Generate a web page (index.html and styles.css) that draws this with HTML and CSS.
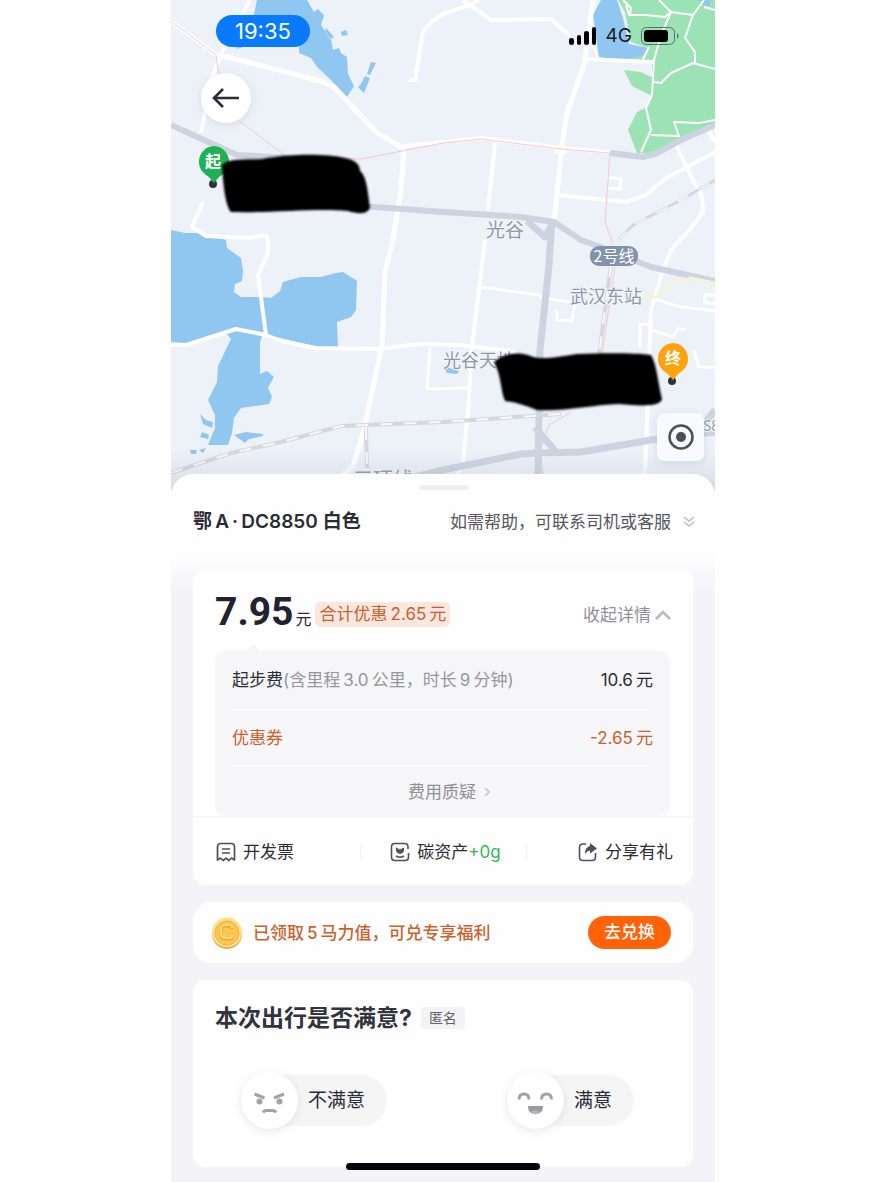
FILE: index.html
```html
<!DOCTYPE html>
<html lang="zh-CN">
<head>
<meta charset="utf-8">
<meta name="viewport" content="width=device-width, initial-scale=1">
<title>行程详情</title>
<link rel="stylesheet" href="styles.css">
</head>
<body>
<main class="phone">
  <section class="map" aria-label="地图">
    <svg class="map-canvas" viewBox="0 0 544 490">
      <defs>
        <filter id="soft" x="-10%" y="-20%" width="120%" height="140%"><feGaussianBlur stdDeviation="1.2"/></filter>
        <linearGradient id="shade" x1="0" y1="0" x2="0" y2="1"><stop offset="0" stop-color="#aab4c6" stop-opacity="0"/><stop offset="1" stop-color="#9aa4b8" stop-opacity=".3"/></linearGradient>
      </defs>
      <rect width="544" height="490" fill="#edf1f8"/>
      <g fill="#8fc7f0">
        <path d="M86 0L83 14 62 40 66 49 75 46 128 46 128 53 140 58 146 67 160 80 176 97 183 86 177 74 176 57 170 53 168 48 162 50 160 40 150 25 153 15 147 9 143 12 136 0Z"/>
        <path d="M155 28L163 37 160 39 154 31ZM170 32L175 30 177 35 171 36ZM200 62L205 63 199 75 196 74ZM194 76L199 78 193 93 187 87 190 84Z"/>
        <path d="M430 0L422 15 428 57 453 61 475 55 477 48 458 44 452 18 446 0Z"/>
        <path d="M0 230L14 233 30 233 55 240 56 248 70 258 72 271 71 281 64 284 63 292 70 297 90 297 100 298 109 291 112 282 130 277 150 277 165 273 172 272 186 281 185 310 180 317 166 322 167 347 145 347 110 338 92 334 89 342 89 374 96 371 103 377 97 388 101 397 98 404 70 408 63 418 61 433 57 445 37 445 44 428 44 415 37 400 46 382 47 366 60 339 55 333 15 343 0 342Z"/>
        <path d="M29 414L35 420 42 422 41 428 32 424ZM31 432L38 435 37 439 29 437ZM19 450L26 450 25 454 20 454ZM28 450L35 448 32 453ZM63 435L75 432 92 434 92 436 78 439 74 443ZM272 366L288 371 286 374 276 373Z"/>
      </g>
      <path fill="#9be2b4" d="M447 0L544 0 544 126 515 138 500 147 485 153 466 153 457 130 466 112 476 107 481 96 461 86 453 70 470 72 480 77 480 72 453 61 476 54 477 48 460 42 454 12Z"/>
      <path fill="#edf1f8" d="M456 63L481 63 481 77 465 69Z"/>
      <path fill="#8fc7f0" d="M526 0L540 0 538 7Z"/>
      <g fill="none" stroke="#fff" stroke-width="2" stroke-linejoin="round">
        <path d="M455 5L458 15 475 15 494 17 500 12 522 15 533 0M488 0L500 12 490 35 483 60 481 95 475 108 480 130 470 152M483 82L490 83 500 73 522 63 544 69M522 15L514 38 524 52 524 63M480 135L508 136 503 122 528 123 544 120M533 7L544 10M452 0L460 8 459 15M422 46L427 58M478 47L472 59"/>
      </g>
      <g fill="none" stroke="#fff" stroke-width="4" stroke-linejoin="round">
        <path stroke-width="5" d="M45 55L60 58 150 81 163 87 176 101 205 132 232 148M233 148L230 190 222 240 214 272 211 345 193 430 182 466 168 478M422 0L415 50 414 62 396 113 391 145 383 222"/>
        <path d="M0 21L45 55M79 0L52 50 40 80 30 133M272 14L260 22 252 32 244 80 238 80M272 14L299 5 320 20 380 19 399 36M292 0L299 5 308 0M415 59L482 62M226 147L272 142 310 138 390 148 439 152M388 195L455 202 475 195 495 178 520 165 544 152M536 128L544 142M505 145L518 172 531 197 532 212 520 228 500 250 492 270 480 310 474 474M324 143L317 210M384 151L396 151"/>
        <path d="M0 345L15 345 65 329 95 335 110 341 145 348 205 349 250 344 290 345 344 352M95 335L87 275 97 253 97 240 95 235 78 238 35 236 21 227 32 202M314 240L300 355 298 400 292 462 287 474"/>
        <path stroke-width="3" d="M311 287L368 295 374 301M374 298L404 303 401 321 386 320 386 310M480 298L510 307 544 311M469 347L469 324 479 325M259 347L256 389 296 388M436 177L450 179 449 189 438 188M544 295L534 295 534 302 544 304M480 330L502 337 507 329 515 329M523 350L528 367 544 367"/>
      </g>
      <g fill="none" stroke="#f5c9cd" stroke-width="1">
        <path d="M0 21L45 55 47 70 67 120 115 156 190 159 272 143 310 139 390 149 439 153 434 222 442 244M445 260L431 355M372 474L369 450 378 425 400 412"/>
      </g>
      <g fill="none" stroke="#cbd4e0" stroke-width="6" stroke-linejoin="round">
        <path d="M0 125L66 155 120 158M190 206L272 212 350 217 383 222 410 240 435 249 480 267 544 281M439 153L472 157 486 153 510 140 544 125"/>
        <path stroke-width="7" d="M381 221L378 265 369 350 367 474M240 478L272 470 350 454 364 453 410 452 480 440 544 432M364 427L385 452M356 221L374 237 383 222M527 432L544 410"/>
      </g>
      <g fill="none">
        <path stroke="#d6d7da" stroke-width="4" d="M0 473L60 453 110 442 170 426 220 424 272 422 390 414M195 428L196 468M440 265L428 355"/>
        <path stroke="#f8f9fa" stroke-width="2" stroke-dasharray="12 12" d="M0 473L60 453 110 442 170 426 220 424 272 422 390 414M195 428L196 468M440 265L428 355"/>
        <path stroke="#d6d7da" stroke-width="3" d="M447 240L462 225 510 200 544 180"/>
        <path stroke="#f8f9fa" stroke-width="1.500" stroke-dasharray="12 12" d="M447 240L462 225 510 200 544 180"/>
        <path stroke="#f6f3d9" stroke-width="3" d="M466 298L485 297 498 284 520 278 544 283"/>
      </g>
      <g class="map-label">
        <text x="315" y="237" font-size="19">光谷</text>
        <text x="399" y="303" font-size="18">武汉东站</text>
        <text x="272" y="367" font-size="18">光谷天地</text>
        <text x="182" y="487" font-size="20">三环线</text>
        <text x="532" y="431" font-size="14">S8</text>
      </g>
      <rect x="419" y="246" width="48" height="20" rx="9" fill="#8392ad"/>
      <text class="line-label" x="443" y="262" text-anchor="middle">2号线</text>
      <rect y="450" width="544" height="40" fill="url(#shade)"/>
      <circle cx="42" cy="184" r="4" fill="#303238"/>
      <path fill="#1fb155" d="M43 146a15.500 15.500 0 0 1 15 16c0 7-4 11-10 15l-5 6-5-6c-6-4-10-8-10-15a15.500 15.500 0 0 1 15-16Z"/>
      <text class="pin-label" x="42" y="167" text-anchor="middle">起</text>
      <circle cx="501" cy="381" r="4" fill="#303238"/>
      <path fill="#fba30c" d="M502 343a15.500 15.500 0 0 1 15 16c0 7-4 11-10 15l-5 6-5-6c-6-4-10-8-10-15a15.500 15.500 0 0 1 15-16Z"/>
      <text class="pin-label" x="502" y="364" text-anchor="middle">终</text>
      <g filter="url(#soft)">
        <path d="M51 165C58 158 74 160 91 159 115 154 155 153 174 158 186 160 189 166 189 171 196 176 197 195 199 207 197 215 187 214 177 211 146 208 106 213 60 212 54 205 52 182 51 165Z"/>
        <path d="M323 362C332 353 348 352 357 355 370 361 385 357 406 354 435 353 465 353 480 355 486 365 487 384 491 399 489 407 470 406 448 404 420 405 390 412 366 410 357 407 350 403 334 401 329 389 331 377 323 362Z"/>
      </g>
    </svg>
    <div class="status">
      <span class="clock">19:35</span>
      <span class="signals">
        <svg width="28" height="18" viewBox="0 0 28 18" aria-hidden="true"><path d="M0 13a2.500 2 0 0 1 5 0v3a2.500 2 0 0 1-5 0ZM8 10a2 2 0 0 1 4 0v6a2 2 0 0 1-4 0ZM15 6a2.500 2 0 0 1 5 0v10a2.500 2 0 0 1-5 0ZM23 2a2 2 0 0 1 4 0v14a2 2 0 0 1-4 0Z"/></svg>
        <span>4G</span>
        <svg width="38" height="18" viewBox="0 0 38 18" aria-hidden="true"><rect x=".5" y=".5" width="33" height="17" rx="5" fill="none" stroke="#626a72"/><rect x="3" y="3" width="24" height="12" rx="3"/><path d="M36 6q3 3 0 6Z" fill="#626a72"/></svg>
      </span>
    </div>
    <button class="back" type="button" aria-label="返回"><svg width="28" height="22" viewBox="0 0 28 22"><path d="M27 11H2M11 2L2 11l9 9" fill="none" stroke="#2e2b38" stroke-width="2.600"/></svg></button>
    <button class="locate" type="button" aria-label="定位"><svg width="28" height="28" viewBox="0 0 28 28"><circle cx="14" cy="14" r="11.500" fill="none" stroke="#4d4d58" stroke-width="2.500"/><circle cx="14" cy="14" r="5" fill="#4d4d58"/></svg></button>
  </section>

  <section class="sheet">
    <header class="sheet-head">
      <span class="grip"></span>
      <div class="car-row">
        <h1 class="plate">鄂&thinsp;A&thinsp;·&thinsp;DC8850 白色</h1>
        <button class="help" type="button">如需帮助，可联系司机或客服
          <svg width="12" height="12" viewBox="0 0 12 12" aria-hidden="true"><path d="M1 1l5 4 5-4M1 6l5 4 5-4" fill="none" stroke="#bcbcc2" stroke-width="1.500"/></svg>
        </button>
      </div>
    </header>

    <div class="cards">
      <article class="card">
        <div class="price-row">
          <div class="total"><strong class="price">7.95</strong><span class="unit">元</span></div>
          <span class="saving">合计优惠&thinsp;2.65&thinsp;元</span>
          <button class="toggle" type="button">收起详情
            <svg width="16" height="11" viewBox="0 0 16 11" aria-hidden="true"><path d="M1 10l7-7 7 7" fill="none" stroke="#b9b9be" stroke-width="2.500"/></svg>
          </button>
        </div>
        <div class="details">
          <div class="fee"><span>起步费<span class="muted">(含里程&thinsp;3.0&thinsp;公里，时长&thinsp;9&thinsp;分钟)</span></span><span>10.6&thinsp;元</span></div>
          <div class="fee coupon"><span>优惠券</span><span>-2.65&thinsp;元</span></div>
          <button class="dispute" type="button">费用质疑
            <svg width="7" height="12" viewBox="0 0 7 12" aria-hidden="true"><path d="M1 2l4 4-4 4" fill="none" stroke="#c3c3c8" stroke-width="1.500"/></svg>
          </button>
        </div>
        <nav class="actions">
          <button class="action first" type="button"><svg width="20" height="20" viewBox="0 0 20 20" aria-hidden="true"><path d="M1.500 18V5q0-3.500 3.500-3.500h10q3.500 0 3.500 3.500v13l-3-2-2.700 2.500L10 16.200l-2.800 2.300L4.500 16ZM6 7h8M6 11h8" fill="none" stroke="#50505a" stroke-width="1.700" stroke-linejoin="round"/></svg>开发票</button>
          <button class="action" type="button"><svg width="20" height="20" viewBox="0 0 20 20" aria-hidden="true"><path d="M18 7V5q0-3.500-3.500-3.500H5Q1.500 1.500 1.500 5v10q0 3.500 3.500 3.500h10q3.500 0 3.500-3.500v-4M6 14q4 2.500 8 0" fill="none" stroke="#50505a" stroke-width="1.600"/><path d="M10 12Q5 11 6 5.500q2.500 0 3 2.500l1-2 1 2q.5-2.500 3-2.500 1 5.500-4 6.500Z" fill="#50505a"/></svg><span>碳资产<span class="green">+0g</span></span></button>
          <button class="action last" type="button"><svg width="20" height="20" viewBox="0 0 20 20" aria-hidden="true"><path d="M8 2H5Q1.500 2 1.500 5.500V15q0 3.500 3.500 3.500h9q3.500 0 3.500-3.500v-4" fill="none" stroke="#50505a" stroke-width="1.600"/><path d="M12 1l7 5.500-7 5V8.500q-3 .2-5 3.500 0-7 5-8Z" fill="#50505a"/></svg>分享有礼</button>
        </nav>
      </article>

      <article class="card reward">
        <svg width="32" height="32" viewBox="0 0 32 32" aria-hidden="true"><circle cx="16" cy="17" r="15" fill="#e0a04a"/><circle cx="16" cy="15.500" r="15" fill="#ffe084"/><circle cx="16" cy="16" r="12" fill="#f9c650" stroke="#f0b240"/><path d="M21 12v-1q0-2-2-2h-4q-5 0-5 5v3q0 5 5 5h4q2 0 2-2v-1" fill="none" stroke="#eba53c" stroke-width="3"/><path d="M21 11v-1q0-2-2-2h-4q-5 0-5 5v3q0 5 5 5h4q2 0 2-2v-1" fill="none" stroke="#ffdc80" stroke-width="2"/></svg>
        <span class="reward-text">已领取&thinsp;5&thinsp;马力值，可兑专享福利</span>
        <button class="redeem" type="button">去兑换</button>
      </article>

      <article class="card rating">
        <div class="rating-head"><h2>本次出行是否满意?</h2><span class="tag">匿名</span></div>
        <div class="choices">
          <button class="choice" type="button"><span class="face"><svg width="57" height="57" viewBox="0 0 57 57" aria-hidden="true"><g fill="none" stroke="#a2a2aa" stroke-width="3"><path d="M13.500 22l10 4M43 22l-10 4M22 40.500q1-2 4-2h5q3 0 4 2"/></g><circle cx="18.500" cy="29.500" r="3" fill="#a2a2aa"/><circle cx="38.500" cy="29.500" r="3" fill="#a2a2aa"/></svg></span>不满意</button>
          <button class="choice" type="button"><span class="face"><svg width="57" height="57" viewBox="0 0 57 57" aria-hidden="true"><g fill="none" stroke="#a2a2aa" stroke-width="3"><path d="M12 27.500q0-5.500 5-5.500t5 5.500M34.500 27.500q0-5.500 5-5.500t5 5.500"/></g><path d="M21 34h15q0 8-7.500 8T21 34Z" fill="#9999a2"/><path d="M24 40q4-3 9 0-4 3-9 0" fill="#b9b9c0"/></svg></span>满意</button>
        </div>
      </article>
    </div>
    <span class="home-bar"></span>
  </section>
</main>
</body>
</html>
```

FILE: styles.css
```css
* { box-sizing: border-box; }
body {
  margin: 0;
  background: #fefefe;
  color: #2c2c36;
  font: 17px/24px Inter, "Noto Sans CJK SC", sans-serif;
}
button {
  margin: 0;
  padding: 0;
  border: 0;
  background: none;
  color: inherit;
  font: inherit;
  white-space: nowrap;
  cursor: pointer;
}
svg { display: block; flex: none; }
h1, h2 { margin: 0; }

.phone { max-width: 544px; margin: 0 auto; background: #f3f3f8; }

.map { position: relative; overflow: hidden; }
.map-canvas { width: 100%; height: auto; }
.map-label {
  fill: #8b97ad;
  stroke: #f5f8fc;
  stroke-width: 2px;
  paint-order: stroke;
  font-family: "Noto Sans CJK SC", sans-serif;
}
.line-label { font: 16px "Noto Sans CJK SC", sans-serif; fill: #fff; }
.pin-label { font: 700 16px "Noto Sans CJK SC", sans-serif; fill: #fff; }
.status {
  position: absolute;
  top: 15px;
  left: 45px;
  right: 36px;
  display: flex;
  justify-content: space-between;
  align-items: flex-start;
}
.clock {
  padding: 0 19px;
  border-radius: 16px;
  background: #077aff;
  color: #fff;
  font-size: 22px;
  line-height: 32px;
}
.signals {
  display: flex;
  align-items: center;
  gap: 9px;
  padding-top: 9px;
  color: #17191e;
  font-size: 19px;
}
.back {
  position: absolute;
  top: 73px;
  left: 30px;
  display: grid;
  place-items: center;
  width: 50px;
  height: 50px;
  border-radius: 50%;
  background: #fefefe;
  box-shadow: 0 2px 8px #8892a633;
}
.locate {
  position: absolute;
  right: 11px;
  bottom: 29px;
  display: grid;
  place-items: center;
  width: 47px;
  height: 48px;
  border-radius: 7px;
  background: #f8fafd;
  box-shadow: 0 2px 8px #8892a633;
}

.sheet {
  position: relative;
  margin-top: -16px;
  padding-bottom: 15px;
  border-radius: 22px 22px 0 0;
  background: linear-gradient(#fefefe 80px, #f3f3f8 120px);
}
.sheet-head { padding: 11px 20px 0 22px; height: 96px; }
.grip { display: block; width: 50px; height: 5px; margin: 0 auto; border-radius: 3px; background: #efeff1; }
.car-row { display: flex; justify-content: space-between; align-items: center; padding-top: 20px; }
.plate { font-size: 19px; font-weight: 600; line-height: 24px; white-space: nowrap; }
.help { display: flex; align-items: center; gap: 12px; color: #56565f; }

.cards { display: grid; gap: 17px; padding: 0 22px; }
.card { min-width: 0; border-radius: 12px; background: #fefefe; }
.price-row {
  display: flex;
  align-items: center;
  height: 81px;
  padding: 8px 22px 0;
}
.total { display: flex; align-items: baseline; height: 64px; }
.price { font: 700 39px/58px Roboto, sans-serif; color: #222230; }
.unit { margin: 0 4px 0 2px; font-size: 16px; }
.saving { padding: 0 4px; border-radius: 5px; background: #fce7df; color: #c4622f; line-height: 25px; white-space: nowrap; }
.toggle { display: flex; align-items: center; gap: 4px; margin-left: auto; color: #909098; }

.details { position: relative; margin: 0 23px 0 22px; padding: 0 17px; border-radius: 10px; background: #f6f6f8; }
.details::before {
  content: "";
  position: absolute;
  top: -7px;
  left: 30px;
  border: solid transparent;
  border-width: 0 8px 7px;
  border-bottom-color: #f6f6f8;
}
.fee {
  display: flex;
  justify-content: space-between;
  padding: 17px 0;
  border-bottom: 2px solid #fcfcfd;
}
.coupon { padding: 15px 0; color: #c9602d; }
.muted { color: #96969d; }
.dispute {
  display: flex;
  align-items: center;
  justify-content: center;
  gap: 8px;
  width: 100%;
  padding: 13px 0 12px 14px;
  color: #909098;
}
.actions { display: grid; grid-template-columns: repeat(3, 1fr); padding: 27px 0 25px; border-top: 1px solid #f4f4f6; }
.action {
  display: flex;
  align-items: center;
  justify-content: center;
  gap: 7px;
  height: 16px;
  padding-left: 4px;
}
.action + .action { border-left: 1px solid #f2f2f4; }
.first { justify-content: flex-start; padding-left: 23px; }
.last { justify-content: flex-end; padding-right: 20px; }
.green { color: #35b65c; }

.reward { display: flex; align-items: center; gap: 10px; padding: 14px 22px 14px 18px; border-radius: 18px; }
.reward-text { color: #cb622e; font-weight: 500; white-space: nowrap; }
.redeem {
  margin-left: auto;
  padding: 0 16px;
  border-radius: 17px;
  background: #ff6207;
  color: #fff;
  font-weight: 500;
  line-height: 33px;
}

.rating { padding: 22px 0 38px; }
.rating-head { display: flex; align-items: center; gap: 9px; padding: 0 22px; }
.rating-head h2 { font-size: 23px; font-weight: 700; line-height: 32px; color: #33333d; }
.tag { padding: 0 8px; border-radius: 4px; background: #f3f3f5; color: #61616a; font-size: 14px; line-height: 22px; }
.choices { display: flex; justify-content: space-between; padding: 38px 59px 0 48px; }
.choice {
  display: flex;
  align-items: center;
  gap: 10px;
  margin: 3px 0;
  padding-right: 22px;
  height: 51px;
  border-radius: 26px;
  background: #f5f5f6;
  font-size: 19px;
}
.face { border-radius: 50%; background: #fefefe; box-shadow: 0 2px 8px #60606822; }

.home-bar {
  position: absolute;
  left: 0;
  right: 0;
  bottom: 12px;
  width: 194px;
  height: 7px;
  margin: 0 auto;
  border-radius: 4px;
  background: #03030b;
}
```
